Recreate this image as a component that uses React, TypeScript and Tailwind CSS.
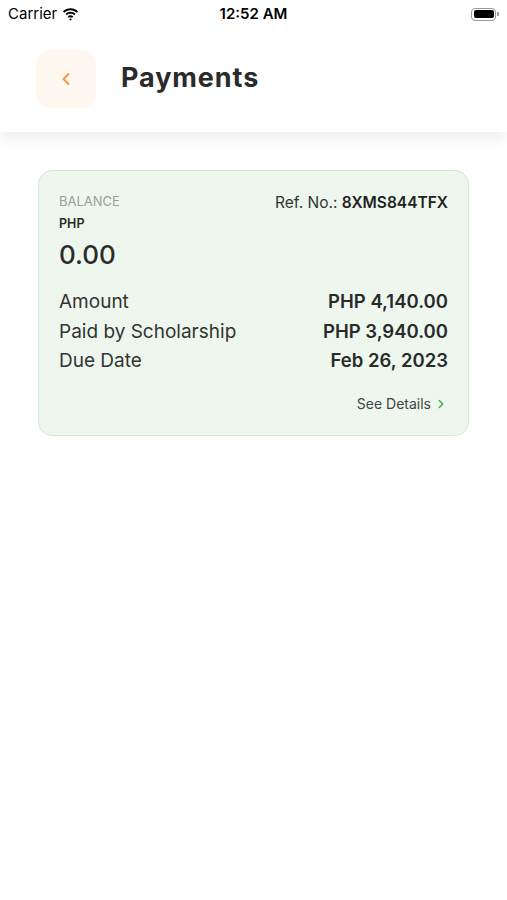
import { ChevronLeft, ChevronRight } from "lucide-react";

function StatusBar() {
  return (
    <div className="flex h-[28px] items-center justify-between px-[8px] text-[15px] text-black">
      <div className="flex w-[120px] items-center gap-[5px]">
        <span>Carrier</span>
        <svg width="17" height="13" viewBox="0 0 17 13" fill="black">
          <path d="M8.5 2.2c2.4 0 4.6.9 6.3 2.5l1.3-1.3C14 1.3 11.4.2 8.5.2S3 1.3.9 3.4l1.3 1.3c1.7-1.6 3.9-2.5 6.3-2.5z" />
          <path d="M8.5 5.8c1.4 0 2.7.5 3.7 1.4l1.3-1.3C12.2 4.6 10.4 3.8 8.5 3.8S4.8 4.6 3.5 5.9l1.3 1.3c1-.9 2.3-1.4 3.7-1.4z" />
          <path d="M8.5 9.2c.6 0 1.1.2 1.5.6l1.4-1.4c-.8-.8-1.8-1.2-2.9-1.2s-2.1.4-2.9 1.2L7 9.8c.4-.4.9-.6 1.5-.6zM8.5 12.6l1.4-1.4c-.4-.4-.9-.6-1.4-.6s-1 .2-1.4.6z" />
        </svg>
      </div>
      <span className="font-semibold">12:52 AM</span>
      <div className="flex w-[120px] justify-end">
        <div className="flex items-center">
          <div className="h-[13px] w-[25px] rounded-[4px] border border-[#999] p-[1.5px]">
            <div className="h-full w-full rounded-[2px] bg-black" />
          </div>
          <div className="ml-[1px] h-[4px] w-[2px] rounded-r-[1px] bg-[#999]" />
        </div>
      </div>
    </div>
  );
}

function Row({ label, value }: { label: string; value: string }) {
  return (
    <div className="flex items-center justify-between">
      <span className="text-[19px] text-[#333]">{label}</span>
      <span className="text-[18.5px] font-semibold text-[#2a2a2a]">{value}</span>
    </div>
  );
}

export default function App() {
  return (
    <div
      className="min-h-[900px] bg-white"
      style={{ fontFamily: "Inter, 'Noto Sans', sans-serif" }}
    >
      <div className="relative z-10 bg-white shadow-[0_6px_14px_rgba(0,0,0,0.07)]">
        <StatusBar />
        <div className="flex h-[104px] items-center gap-[25px] px-[36px] pb-[3px]">
          <button className="flex h-[58px] w-[60px] items-center justify-center rounded-[14px] bg-[#fff8f1]">
            <ChevronLeft size={20} strokeWidth={2.2} className="text-[#f0963c]" />
          </button>
          <h1 className="text-[27px] font-bold tracking-[0.9px] text-[#2b2b2b]">Payments</h1>
        </div>
      </div>

      <div className="px-[38px] pt-[38px]">
        <div className="rounded-[14px] border border-[#d3ead5] bg-[#edf7ee] px-[20px] pb-[21px] pt-[22px]">
          <div className="flex justify-between">
            <div className="flex flex-col">
              <span className="text-[13px] leading-[17px] text-[#9a9e9b]">BALANCE</span>
              <span className="mt-[6px] text-[12.5px] font-semibold leading-[16px] text-[#2b2b2b]">PHP</span>
              <span className="mt-[7px] text-[26px] font-medium leading-[32px] text-[#2b2b2b]">0.00</span>
            </div>
            <div className="text-[15.5px] leading-[20px] text-[#333]">
              Ref. No.: <span className="font-semibold text-[#222]">8XMS844TFX</span>
            </div>
          </div>
          <div className="mt-[18px] flex flex-col gap-[4.5px] leading-[25px]">
            <Row label="Amount" value="PHP 4,140.00" />
            <Row label="Paid by Scholarship" value="PHP 3,940.00" />
            <Row label="Due Date" value="Feb 26, 2023" />
          </div>
          <div className="mt-[20px] flex items-center justify-end gap-[3px]">
            <span className="text-[14px] text-[#444]">See Details</span>
            <ChevronRight size={14} strokeWidth={2.5} className="text-[#3fa85a]" />
          </div>
        </div>
      </div>
    </div>
  );
}
